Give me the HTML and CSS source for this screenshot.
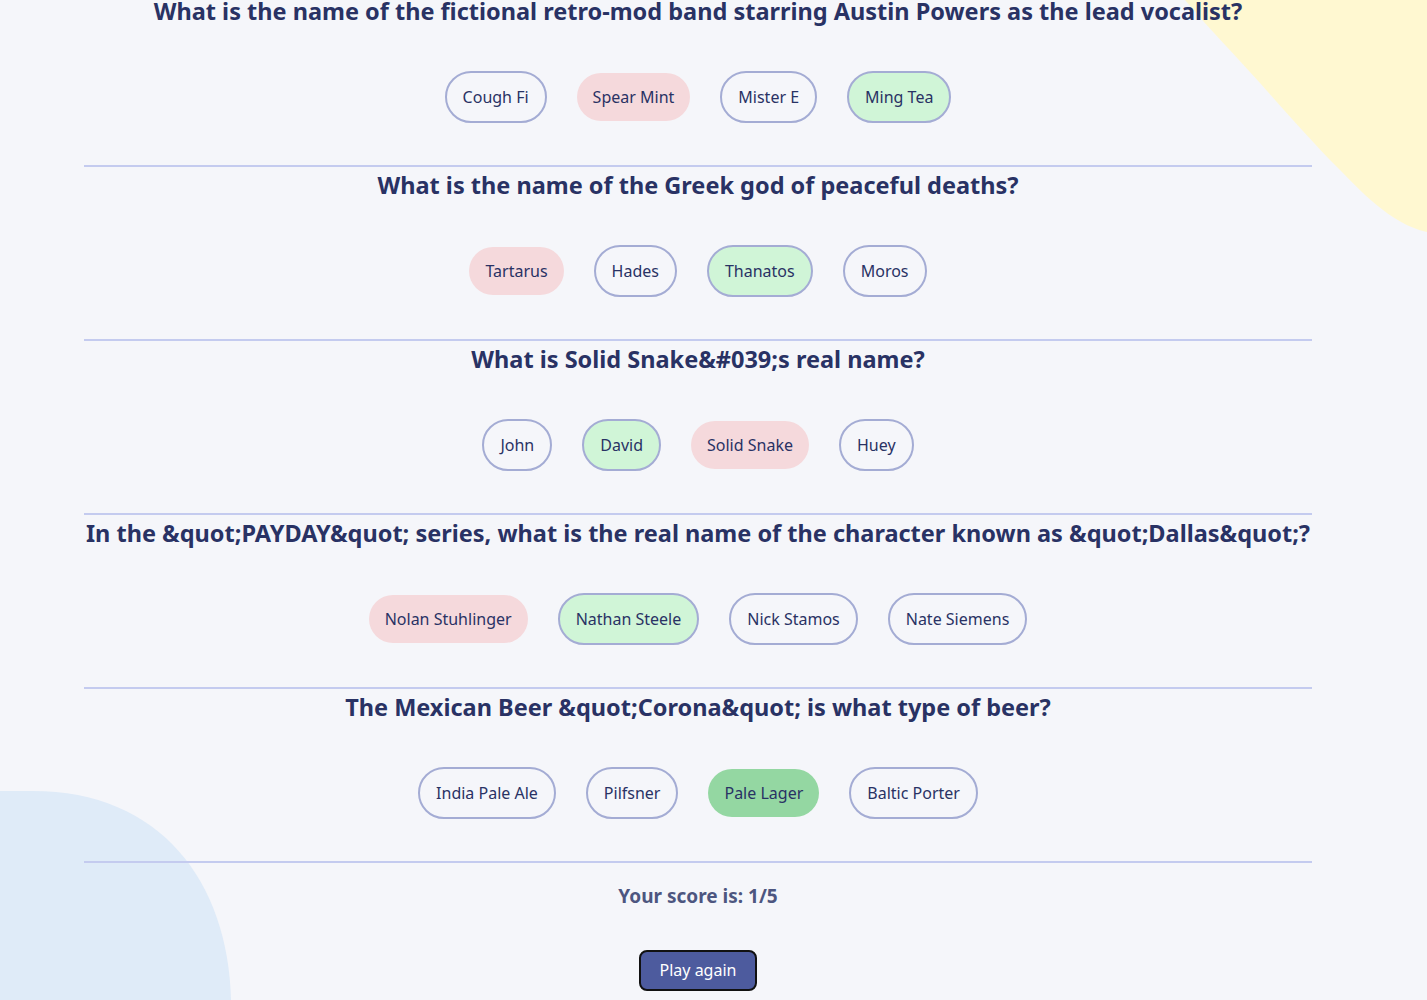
FILE: index.html
```html
<!DOCTYPE html>
<html lang="en">
<head>
<meta charset="utf-8">
<title>Quizzical</title>
<link rel="stylesheet" href="styles.css">
</head>
<body>
<svg class="blob blob-yellow" width="242" height="240" viewBox="0 0 242 240" aria-hidden="true">
  <path d="M0 0 C 25 30, 50 55, 75 83 S 130 145, 152 167 S 205 224, 242 232 L 242 0 Z" fill="#fff8d1"/>
</svg>
<svg class="blob blob-blue" width="240" height="209" viewBox="0 0 240 209" aria-hidden="true">
  <path d="M0 0 L 33 0 C 160 0, 228 90, 231 209 L 0 209 Z" fill="#dfebf8"/>
</svg>
<main class="quiz">
  <section class="question">
    <h2 class="question-title">What is the name of the fictional retro-mod band starring Austin Powers as the lead vocalist?</h2>
    <div class="answers">
      <button class="answer">Cough Fi</button>
      <button class="answer wrong">Spear Mint</button>
      <button class="answer">Mister E</button>
      <button class="answer correct">Ming Tea</button>
    </div>
  </section>
  <section class="question">
    <h2 class="question-title">What is the name of the Greek god of peaceful deaths?</h2>
    <div class="answers">
      <button class="answer wrong">Tartarus</button>
      <button class="answer">Hades</button>
      <button class="answer correct">Thanatos</button>
      <button class="answer">Moros</button>
    </div>
  </section>
  <section class="question">
    <h2 class="question-title">What is Solid Snake&amp;#039;s real name?</h2>
    <div class="answers">
      <button class="answer">John</button>
      <button class="answer correct">David</button>
      <button class="answer wrong">Solid Snake</button>
      <button class="answer">Huey</button>
    </div>
  </section>
  <section class="question">
    <h2 class="question-title">In the &amp;quot;PAYDAY&amp;quot; series, what is the real name of the character known as &amp;quot;Dallas&amp;quot;?</h2>
    <div class="answers">
      <button class="answer wrong">Nolan Stuhlinger</button>
      <button class="answer correct">Nathan Steele</button>
      <button class="answer">Nick Stamos</button>
      <button class="answer">Nate Siemens</button>
    </div>
  </section>
  <section class="question">
    <h2 class="question-title">The Mexican Beer &amp;quot;Corona&amp;quot; is what type of beer?</h2>
    <div class="answers">
      <button class="answer">India Pale Ale</button>
      <button class="answer">Pilfsner</button>
      <button class="answer right">Pale Lager</button>
      <button class="answer">Baltic Porter</button>
    </div>
  </section>
  <div class="result">
    <p class="score">Your score is: 1/5</p>
    <button class="play-again">Play again</button>
  </div>
</main>
</body>
</html>
```

FILE: styles.css
```css
html, body {
  margin: 0;
  padding: 0;
}

body {
  background: #f5f6fa;
  font-family: "Noto Sans", "Open Sans", sans-serif;
  color: #293264;
  position: relative;
  min-height: 1000px;
  overflow: hidden;
}

.blob {
  position: absolute;
  z-index: 0;
  display: block;
}

.blob-yellow {
  top: 0;
  right: 0;
}

.blob-blue {
  left: 0;
  top: 791px;
}

.quiz {
  position: relative;
  z-index: 1;
  width: 1228px;
  margin: -7px 0 0 84px;
}

.question {
  border-bottom: 2px solid #c4cbef;
  padding-bottom: 42px;
}

.question-title {
  margin: 0;
  font-size: 23.5px;
  line-height: 36px;
  font-weight: 700;
  text-align: center;
  color: #293264;
  white-space: nowrap;
}

.answers {
  margin-top: 42px;
  display: flex;
  justify-content: center;
  align-items: center;
  gap: 30px;
  height: 52px;
}

.answer {
  font-family: inherit;
  font-size: 16px;
  line-height: 24px;
  color: #293264;
  background: transparent;
  border: 2px solid #a4acd4;
  border-radius: 26px;
  padding: 12px 16px;
  cursor: pointer;
}

.answer.wrong {
  background: #f5d9dc;
  border: none;
}

.answer.correct {
  background: #d0f5d7;
}

.answer.right {
  background: #94d7a2;
  border: none;
}

.result {
  padding-top: 19px;
  text-align: center;
}

.score {
  margin: 0;
  font-size: 19px;
  line-height: 28px;
  font-weight: 700;
  color: #4d5680;
}

.play-again {
  margin-top: 40px;
  font-family: inherit;
  font-size: 16px;
  line-height: 25px;
  padding: 6px 19px;
  color: #ffffff;
  background: #4d5b9e;
  border: 2px solid #111111;
  border-radius: 8px;
  cursor: pointer;
}
```
